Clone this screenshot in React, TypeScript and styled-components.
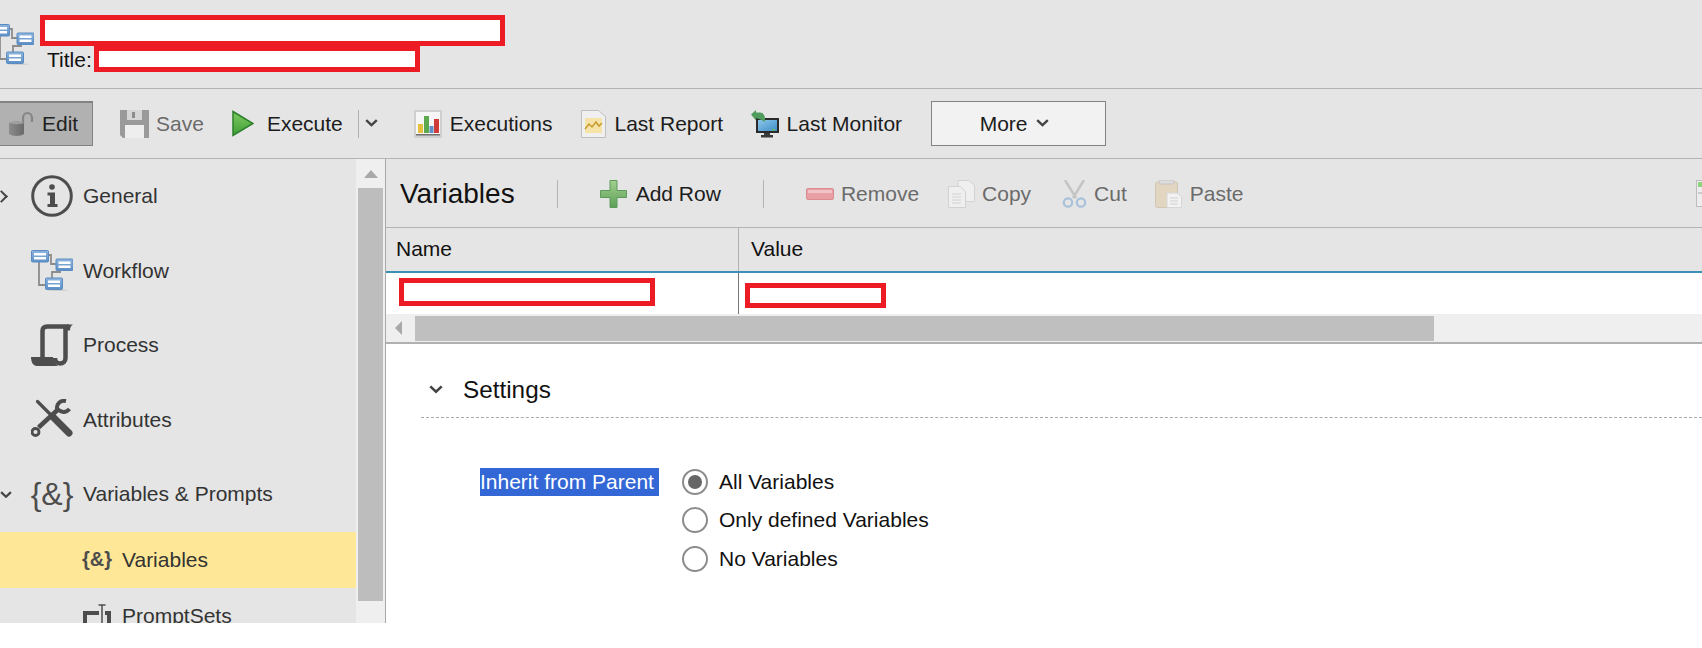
import React from 'react';
import styled, { createGlobalStyle } from 'styled-components';

const GlobalStyle = createGlobalStyle`
  html, body {
    margin: 0;
    background: #fff;
    overflow: hidden;
  }
  body {
    font-family: "Liberation Sans", Arial, sans-serif;
    font-size: 21px;
    color: #1a1a1a;
  }
`;

const WorkflowIcon = ({ className }: { className?: string }) => (
  <svg className={className} width="42" height="41" viewBox="0 0 42 41">
    <defs>
      <linearGradient id="wfBox" x1="0" y1="0" x2="0" y2="1">
        <stop offset="0" stopColor="#8fb6de" />
        <stop offset="1" stopColor="#5b8fc6" />
      </linearGradient>
    </defs>
    <ellipse cx="27" cy="40.300" rx="11" ry=".7" fill="#cfcfcf" />
    <path d="M8 9v26h8M17 5h3v9h5M29 16v6h-8v8" fill="none" stroke="#8c8c8c" strokeWidth="1.800" />
    {[
      [0.5, 0.5],
      [25, 9],
      [14.5, 28],
    ].map(([x, y]) => (
      <g key={x}>
        <rect x={x} y={y} width="17" height="11.500" rx="1" fill="url(#wfBox)" stroke="#5a8cc2" />
        <rect x={x + 2.5} y={y + 2.5} width="12" height="2.500" fill="#fff" />
        <rect x={x + 2.5} y={y + 6.5} width="12" height="2.500" fill="#fff" />
      </g>
    ))}
  </svg>
);

const InfoIcon = () => (
  <svg width="42" height="42" viewBox="0 0 42 42">
    <circle cx="21" cy="21" r="19.3" fill="none" stroke="#4d4d4d" strokeWidth="3" />
    <circle cx="21" cy="12" r="2.800" fill="#4d4d4d" />
    <path d="M16.500 17.500h7.500v11.500h2.500v3h-10v-3h2.500v-8.500h-2.500z" fill="#4d4d4d" />
  </svg>
);

const ScrollIcon = () => (
  <svg width="42" height="42" viewBox="0 0 42 42">
    <path d="M11.500 36V7c0-3 2-4.500 5-4.500H38" fill="none" stroke="#4d4d4d" strokeWidth="4.500" />
    <path d="M34.500 4v30c0 3.500-2.500 5.500-5.500 5.500s-5-2-5-5.500" fill="none" stroke="#4d4d4d" strokeWidth="4.500" />
    <path d="M36 .5h6c-2 1-3 3-3 6h-3z" fill="#4d4d4d" />
    <path d="M0 33h22c0 4 2 7 5 9H6c-4 0-6-4-6-9z" fill="#4d4d4d" />
  </svg>
);

const ToolsIcon = () => (
  <svg width="42" height="42" viewBox="0 0 42 42" fill="none" stroke="#4d4d4d" strokeLinecap="round">
    <path d="M6.500 2.500L22 18" strokeWidth="3.200" />
    <path d="M22 18l16 16" strokeWidth="7" />
    <path d="M7.500 28.500L27 10.500" strokeWidth="4.500" strokeLinecap="butt" />
    <circle cx="4.500" cy="33" r="3.500" strokeWidth="2.800" />
    <path d="M35 2C29 1 25.500 5 26 9.500c4 4.500 9 4.500 12.500.5" strokeWidth="4" strokeLinecap="butt" />
  </svg>
);

const PromptSetIcon = () => (
  <svg width="28" height="32" viewBox="0 0 28 32">
    <path d="M0 7h16v4H4v14h12v4H0z" fill="#4d4d4d" />
    <path d="M22 7h6v22h-6v-4h2V11h-2z" fill="#4d4d4d" />
    <path d="M15.500 1h7M19 1v30" fill="none" stroke="#4d4d4d" strokeWidth="1.500" />
  </svg>
);

const LockIcon = () => (
  <svg width="26" height="26" viewBox="0 0 26 26">
    <defs>
      <linearGradient id="lockBody" x1="0" y1="0" x2="1" y2="0">
        <stop offset="0" stopColor="#8c8c8c" />
        <stop offset="1" stopColor="#6a6a6a" />
      </linearGradient>
    </defs>
    <path d="M15 13V7c0-3 2-5 4.500-5S24 4 24 7v4" fill="none" stroke="#858585" strokeWidth="2.200" />
    <path d="M1 12c3-2 12-2 15 0v11c-3 2.500-12 2.500-15 0z" fill="url(#lockBody)" />
    <path d="M1 12c3-2 12-2 15 0-3 1.500-12 1.500-15 0z" fill="#a0a0a0" />
  </svg>
);

const SaveIcon = () => (
  <svg width="29" height="28" viewBox="0 0 29 28">
    <path d="M0 0h29v28H3l-3-3z" fill="#9a9a9a" />
    <rect x="7" y="0" width="15" height="10" fill="#d6d6d6" />
    <rect x="12" y="2" width="3" height="6" fill="#8c8c8c" />
    <rect x="5" y="15" width="19" height="13" fill="#eeeeee" />
  </svg>
);

const PlayIcon = () => (
  <svg width="22" height="27" viewBox="0 0 22 27">
    <defs>
      <linearGradient id="playFill" x1="0" y1="0" x2="0" y2="1">
        <stop offset="0" stopColor="#7fcb5f" />
        <stop offset="1" stopColor="#3f9e36" />
      </linearGradient>
    </defs>
    <path d="M1 1.500L21 13.500 1 25.500z" fill="url(#playFill)" stroke="#2c7f2a" strokeWidth="1.500" />
  </svg>
);

const ChartIcon = () => (
  <svg width="28" height="28" viewBox="0 0 28 28">
    <rect width="28" height="28" fill="#d0d0d0" />
    <rect x="2" y="2" width="24" height="22" fill="#f6f6f6" />
    <rect x="4" y="14" width="5" height="9" fill="#e8bf3c" />
    <rect x="10" y="6" width="5" height="17" fill="#5ea84e" />
    <rect x="15.500" y="16" width="4" height="7" fill="#5b8fc6" />
    <rect x="20" y="9" width="5" height="14" fill="#cf3b37" />
    <rect x="2" y="24" width="24" height="1.500" fill="#707070" />
  </svg>
);

const ReportIcon = () => (
  <svg width="25" height="28" viewBox="0 0 25 28">
    <path d="M.5.5h17l7 6v21H.5z" fill="#f0f0f0" stroke="#bfbfbf" />
    <rect x="4" y="8" width="17" height="15" fill="#f5e3a8" />
    <path d="M4 19l4-5 3 3 4-5 3 4 3-3" fill="none" stroke="#c99a32" strokeWidth="1.500" />
  </svg>
);

const MonitorIcon = () => (
  <svg width="28" height="28" viewBox="0 0 28 28">
    <defs>
      <linearGradient id="screenFill" x1="0" y1="0" x2="1" y2="1">
        <stop offset="0" stopColor="#8cc6ea" />
        <stop offset="1" stopColor="#3f8fc8" />
      </linearGradient>
    </defs>
    <rect x="5" y="8" width="23" height="15" fill="#2a2a2a" />
    <rect x="7" y="10" width="19" height="11" fill="url(#screenFill)" />
    <rect x="21" y="19" width="3" height="1.500" fill="#5fc05f" />
    <path d="M13 23h6v2h3v2.500H10V25h3z" fill="#3a3a3a" />
    <path d="M0 4.500L5 0v2.500h4c3 0 5 2.500 5 6.500v3l-2.500-1.500L8 9 5 8v2.500z" fill="#4f9c5c" />
  </svg>
);

const PlusIcon = () => (
  <svg width="27" height="28" viewBox="0 0 27 28">
    <defs>
      <linearGradient id="plusFill" x1="0" y1="0" x2="0" y2="1">
        <stop offset="0" stopColor="#a3d08e" />
        <stop offset="1" stopColor="#5b9f56" />
      </linearGradient>
    </defs>
    <path d="M10 .5h7v10h9.500v7H17v10h-7v-10H.5v-7H10z" fill="url(#plusFill)" stroke="#5d9a5c" />
  </svg>
);

const MinusIcon = () => (
  <svg width="28" height="12" viewBox="0 0 28 12">
    <rect x=".5" y=".5" width="27" height="11" rx="1.500" fill="#e9a0a4" stroke="#d98b90" />
    <rect x="2" y="2" width="24" height="3" fill="#f1c3c6" />
  </svg>
);

const CopyIcon = () => (
  <svg width="27" height="28" viewBox="0 0 27 28" fill="#efefef" stroke="#d2d2d2">
    <path d="M10 .5h11l5.500 5v16H10z" />
    <path d="M.5 6.500h12l5 5v16H.5z" />
    <path d="M4 14h9M4 17h9M4 20h9M4 23h9" strokeWidth="1" />
  </svg>
);

const CutIcon = () => (
  <svg width="25" height="28" viewBox="0 0 25 28">
    <path d="M3 0l11 18M22 0L11 18" fill="none" stroke="#c4c4c4" strokeWidth="2.500" />
    <circle cx="6" cy="22.500" r="4.200" fill="none" stroke="#a9c1da" strokeWidth="2.200" />
    <circle cx="19" cy="22.500" r="4.200" fill="none" stroke="#a9c1da" strokeWidth="2.200" />
  </svg>
);

const PasteIcon = () => (
  <svg width="27" height="28" viewBox="0 0 27 28">
    <rect x=".5" y="2" width="22" height="25.500" rx="2" fill="#e2d6c0" stroke="#d0c6b4" />
    <rect x="4" y="0" width="15" height="4" rx="1.500" fill="#dcdcdc" stroke="#c4c4c4" />
    <path d="M12 13h10l4.500 4v10.500H12z" fill="#f2f2f2" stroke="#d6d6d6" />
    <path d="M15 18h8M15 21h8M15 24h8" stroke="#cfcfcf" />
  </svg>
);

const SheetIcon = () => (
  <svg width="28" height="27" viewBox="0 0 28 27">
    <rect x=".5" y=".5" width="27" height="26" fill="#ededed" stroke="#bdbdbd" />
    <rect x="2" y="2" width="24" height="5" fill="#8fd27c" />
    <path d="M7 7v19M2 13h24" stroke="#a6a6a6" fill="none" />
  </svg>
);

const Chevron = ({ size = 13, color = '#444' }: { size?: number; color?: string }) => (
  <svg width={size} height={size * 0.62} viewBox="0 0 13 8">
    <path d="M1.200 1.200L6.500 6.200 11.800 1.200" fill="none" stroke={color} strokeWidth="2.400" />
  </svg>
);

const sideItems = [
  { label: 'General', icon: <InfoIcon />, arrow: 'right' },
  { label: 'Workflow', icon: <WorkflowIcon /> },
  { label: 'Process', icon: <ScrollIcon /> },
  { label: 'Attributes', icon: <ToolsIcon /> },
];

const radios = ['All Variables', 'Only defined Variables', 'No Variables'];

export default function App() {
  return (
    <Page>
      <GlobalStyle />
      <Header>
        <HeaderIcon />
        <HeaderText>
          <RedactBar $width={465} $height={31} />
          <TitleRow>
            <TitleLabel>Title:</TitleLabel>
            <RedactBar $width={326} $height={26} />
          </TitleRow>
        </HeaderText>
      </Header>

      <Toolbar>
        <EditButton>
          <LockIcon />
          Edit
        </EditButton>
        <ToolItem $left={27} $gap={7} $disabled>
          <SaveIcon />
          Save
        </ToolItem>
        <ToolItem $left={28} $gap={13}>
          <PlayIcon />
          Execute
        </ToolItem>
        <SplitLine />
        <SplitChevron>
          <Chevron />
        </SplitChevron>
        <ToolItem $left={36} $gap={8}>
          <ChartIcon />
          Executions
        </ToolItem>
        <ToolItem $left={28} $gap={9}>
          <ReportIcon />
          Last Report
        </ToolItem>
        <ToolItem $left={27.5} $gap={8}>
          <MonitorIcon />
          Last Monitor
        </ToolItem>
        <MoreButton>
          More
          <Chevron />
        </MoreButton>
      </Toolbar>

      <Body>
        <Sidebar>
          <SideList>
            {sideItems.map((item) => (
              <SideRow key={item.label}>
                <Caret>{item.arrow === 'right' && <RightCaret />}</Caret>
                <SideIcon>{item.icon}</SideIcon>
                {item.label}
              </SideRow>
            ))}
            <SideRow>
              <Caret>
                <Chevron size={12} />
              </Caret>
              <SideIcon>
                <BraceMark>{'{&}'}</BraceMark>
              </SideIcon>
              Variables &amp; Prompts
            </SideRow>
            <SubRow $selected>
              <SubIcon>
                <SmallBrace>{'{&}'}</SmallBrace>
              </SubIcon>
              Variables
            </SubRow>
            <SubRow>
              <SubIcon>
                <PromptSetIcon />
              </SubIcon>
              PromptSets
            </SubRow>
          </SideList>
          <VScroll>
            <UpArrow />
            <VThumb />
          </VScroll>
        </Sidebar>

        <Main>
          <SectionBar>
            <SectionTitle>Variables</SectionTitle>
            <BarLine $left={42} />
            <ToolItem $left={42} $gap={9}>
              <PlusIcon />
              Add Row
            </ToolItem>
            <BarLine $left={42} />
            <ToolItem $left={42} $gap={7} $disabled>
              <MinusIcon />
              Remove
            </ToolItem>
            <ToolItem $left={29} $gap={7} $disabled>
              <CopyIcon />
              Copy
            </ToolItem>
            <ToolItem $left={31} $gap={7} $disabled>
              <CutIcon />
              Cut
            </ToolItem>
            <ToolItem $left={28} $gap={8} $disabled>
              <PasteIcon />
              Paste
            </ToolItem>
            <ClippedEnd>
              <SheetIcon />
            </ClippedEnd>
          </SectionBar>

          <TableHead>
            <HeadCell>Name</HeadCell>
            <HeadCell>Value</HeadCell>
          </TableHead>
          <TableRow>
            <BodyCell $top={5} $left={13}>
              <RedactBar $width={256} $height={28} />
            </BodyCell>
            <BodyCell $top={10} $left={6}>
              <RedactBar $width={141} $height={25} />
            </BodyCell>
          </TableRow>
          <HScroll>
            <LeftArrow />
            <HThumb />
          </HScroll>

          <SettingsHead>
            <Chevron size={14} />
            <SettingsTitle>Settings</SettingsTitle>
          </SettingsHead>
          <FormRow>
            <Selected>Inherit from Parent</Selected>
            <RadioList>
              {radios.map((label, i) => (
                <RadioRow key={label}>
                  <RadioDot $checked={i === 0} />
                  {label}
                </RadioRow>
              ))}
            </RadioList>
          </FormRow>
        </Main>
      </Body>
    </Page>
  );
}

const Page = styled.div`
  width: 1702px;
  height: 648px;
  overflow: hidden;
  background: #fff;
`;

const Header = styled.header`
  box-sizing: border-box;
  height: 89px;
  display: flex;
  padding-top: 15px;
  background: #e5e5e5;
  border-bottom: 1px solid #b4b4b4;
`;

const HeaderIcon = styled(WorkflowIcon)`
  flex: none;
  margin: 9px 6px 0 -8px;
`;

const HeaderText = styled.div`
  display: flex;
  flex-direction: column;
`;

const RedactBar = styled.div<{ $width: number; $height: number }>`
  box-sizing: border-box;
  flex: none;
  width: ${(p) => p.$width}px;
  height: ${(p) => p.$height}px;
  background: #fff;
  border: 5px solid #ed1c24;
`;

const TitleRow = styled.div`
  display: flex;
  align-items: center;
  padding-left: 7px;
`;

const TitleLabel = styled.span`
  width: 47px;
  padding-top: 1px;
  white-space: nowrap;
  color: #111;
`;

const Toolbar = styled.div`
  box-sizing: border-box;
  height: 70px;
  display: flex;
  align-items: center;
  background: #e5e5e5;
  border-bottom: 1px solid #b4b4b4;
`;

const EditButton = styled.div`
  box-sizing: border-box;
  width: 93px;
  height: 45px;
  flex: none;
  display: flex;
  align-items: center;
  gap: 8px;
  padding-left: 8px;
  background: #b1b1b1;
  border: 1px solid #828282;
  border-top-width: 2px;
  border-left: 0;
  color: #222;
`;

const ToolItem = styled.div<{ $left: number; $gap: number; $disabled?: boolean }>`
  flex: none;
  display: flex;
  align-items: center;
  gap: ${(p) => p.$gap}px;
  margin-left: ${(p) => p.$left}px;
  color: ${(p) => (p.$disabled ? '#6b6b6b' : '#1c1c1c')};
`;

const SplitLine = styled.span`
  width: 1px;
  height: 28px;
  margin-left: 15px;
  background: #b0b0b0;
`;

const SplitChevron = styled.span`
  display: flex;
  margin-left: 6px;
`;

const MoreButton = styled.div`
  box-sizing: border-box;
  width: 175px;
  height: 45px;
  margin-left: 29px;
  padding-right: 9px;
  display: flex;
  align-items: center;
  justify-content: center;
  gap: 8px;
  background: #f2f2f2;
  border: 1px solid #828282;
  color: #1c1c1c;
`;

const Body = styled.div`
  height: 464px;
  display: flex;
  overflow: hidden;
`;

const Sidebar = styled.aside`
  box-sizing: border-box;
  flex: none;
  width: 386px;
  display: flex;
  background: #e5e5e5;
  border-right: 1px solid #a8a8a8;
`;

const SideList = styled.div`
  width: 356px;
  color: #333;
`;

const SideRow = styled.div`
  height: 74.500px;
  display: flex;
  align-items: center;
`;

const Caret = styled.span`
  width: 31px;
  display: flex;
`;

const RightCaret = styled.span`
  width: 7px;
  height: 7px;
  margin-left: -3px;
  border-top: 2px solid #444;
  border-right: 2px solid #444;
  transform: rotate(45deg);
`;

const SideIcon = styled.span`
  width: 42px;
  height: 42px;
  margin-right: 10px;
  display: flex;
  align-items: center;
  justify-content: center;
`;

const BraceMark = styled.span`
  font-size: 32px;
  line-height: 42px;
  color: #4d4d4d;
`;

const SubRow = styled.div<{ $selected?: boolean }>`
  height: 56px;
  display: flex;
  align-items: center;
  padding-left: 83px;
  background: ${(p) => (p.$selected ? '#fee797' : 'transparent')};
`;

const SubIcon = styled.span`
  width: 28px;
  height: 32px;
  margin-right: 11px;
  display: flex;
  justify-content: center;
  align-items: center;

  svg {
    margin-top: 8px;
  }
`;

const SmallBrace = styled.span`
  font-size: 20px;
  font-weight: bold;
  color: #4d4d4d;
`;

const VScroll = styled.div`
  width: 29px;
  display: flex;
  flex-direction: column;
  align-items: center;
  background: #efefef;
`;

const UpArrow = styled.span`
  margin: 11px 0 10px;
  border-left: 7px solid transparent;
  border-right: 7px solid transparent;
  border-bottom: 8px solid #a8a8a8;
`;

const VThumb = styled.span`
  width: 25px;
  height: 413px;
  background: #bdbdbd;
`;

const Main = styled.main`
  flex: 1;
  min-width: 0;
`;

const SectionBar = styled.div`
  box-sizing: border-box;
  height: 69px;
  display: flex;
  align-items: center;
  padding: 1px 0 0 14px;
  overflow: hidden;
  background: #e5e5e5;
  border-bottom: 1px solid #b4b4b4;
`;

const SectionTitle = styled.h2`
  margin: 0;
  font-size: 28px;
  font-weight: normal;
  color: #111;
`;

const BarLine = styled.span<{ $left: number }>`
  flex: none;
  width: 1px;
  height: 28px;
  margin-left: ${(p) => p.$left}px;
  background: #b4b4b4;
`;

const ClippedEnd = styled.span`
  display: flex;
  margin: 0 -22px 0 auto;
`;

const TableHead = styled.div`
  box-sizing: border-box;
  height: 45px;
  display: grid;
  grid-template-columns: 352px 1fr;
  background: #e5e5e5;
  border-bottom: 2px solid #3d8fb4;
`;

const HeadCell = styled.div`
  display: flex;
  align-items: center;
  padding: 0 0 2px 10px;
  color: #111;

  & + & {
    padding-left: 12px;
    border-left: 1px solid #b0b0b0;
  }
`;

const TableRow = styled.div`
  height: 41px;
  display: grid;
  grid-template-columns: 352px 1fr;
`;

const BodyCell = styled.div<{ $top: number; $left: number }>`
  padding: ${(p) => p.$top}px 0 0 ${(p) => p.$left}px;

  & + & {
    border-left: 1px solid #777;
  }
`;

const HScroll = styled.div`
  box-sizing: border-box;
  height: 30px;
  display: flex;
  align-items: center;
  background: #efefef;
  border-bottom: 2px solid #b0b0b0;
`;

const LeftArrow = styled.span`
  margin: 0 13px 0 9px;
  border-top: 7px solid transparent;
  border-bottom: 7px solid transparent;
  border-right: 7px solid #a8a8a8;
`;

const HThumb = styled.span`
  width: 1019px;
  height: 25px;
  background: #bfbfbf;
`;

const SettingsHead = styled.div`
  box-sizing: border-box;
  height: 74px;
  margin-left: 35px;
  padding: 18px 0 0 8px;
  display: flex;
  align-items: center;
  border-bottom: 1px dashed #aaa;
`;

const SettingsTitle = styled.span`
  margin-left: 20px;
  font-size: 24.300px;
  color: #111;
`;

const FormRow = styled.div`
  display: flex;
  align-items: flex-start;
  margin: 45px 0 0 94px;
`;

const Selected = styled.span`
  width: 179px;
  height: 28px;
  margin: 5px 23px 0 0;
  line-height: 28px;
  white-space: nowrap;
  color: #fff;
  background: #3367d6;
`;

const RadioList = styled.div`
  display: flex;
  flex-direction: column;
`;

const RadioRow = styled.label`
  height: 38.300px;
  display: flex;
  align-items: center;
  gap: 11px;
  color: #111;
`;

const RadioDot = styled.span<{ $checked?: boolean }>`
  box-sizing: border-box;
  width: 26px;
  height: 26px;
  display: flex;
  align-items: center;
  justify-content: center;
  border: 2px solid #8c8c8c;
  border-radius: 50%;
  background: #fff;

  &::after {
    content: '';
    width: 14px;
    height: 14px;
    border-radius: 50%;
    background: ${(p) => (p.$checked ? '#666' : 'transparent')};
  }
`;
